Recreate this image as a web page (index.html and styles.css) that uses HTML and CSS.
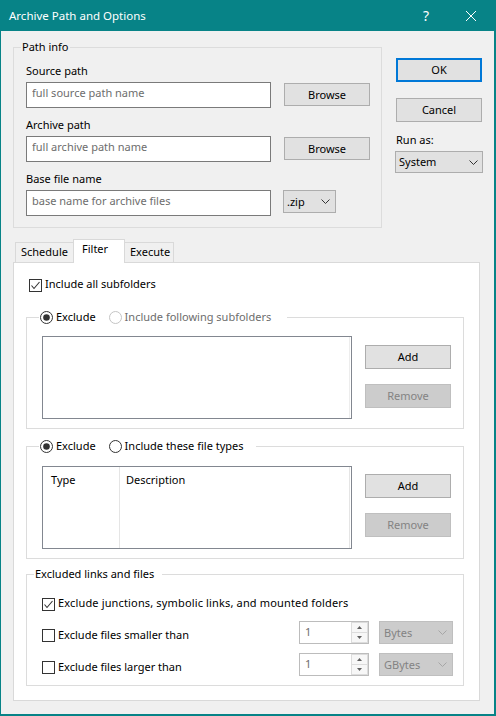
FILE: index.html
```html
<!DOCTYPE html>
<html lang="en">
<head>
<meta charset="utf-8">
<title>Archive Path and Options</title>
<link rel="stylesheet" href="styles.css">
</head>
<body>
<div class="window">
  <div class="titlebar">
    <span class="title">Archive Path and Options</span>
    <span class="cap-btn help">?</span>
    <span class="cap-btn close"><svg width="10" height="10" viewBox="0 0 10 10"><path d="M0 0L10 10M10 0L0 10" stroke="#fff" stroke-width="1" fill="none"/></svg></span>
  </div>
  <div class="client">
    <div class="top">
      <fieldset class="group path">
        <legend class="glegend">Path info</legend>
        <div class="path-body">
          <div class="field">
            <label class="lbl">Source path</label>
            <div class="frow">
              <input class="edit" type="text" placeholder="full source path name">
              <button class="btn browse">Browse</button>
            </div>
          </div>
          <div class="field">
            <label class="lbl">Archive path</label>
            <div class="frow">
              <input class="edit" type="text" placeholder="full archive path name">
              <button class="btn browse">Browse</button>
            </div>
          </div>
          <div class="field">
            <label class="lbl">Base file name</label>
            <div class="frow frow-zip">
              <input class="edit" type="text" placeholder="base name for archive files">
              <div class="combo zip"><span>.zip</span><svg class="chev" width="9" height="5" viewBox="0 0 9 5"><path d="M0.5 0.5L4.5 4.5L8.5 0.5" stroke="#333" fill="none"/></svg></div>
            </div>
          </div>
        </div>
      </fieldset>
      <div class="side">
        <button class="btn ok">OK</button>
        <button class="btn cancel">Cancel</button>
        <span class="lbl runas">Run as:</span>
        <div class="combo system"><span>System</span><svg class="chev" width="9" height="5" viewBox="0 0 9 5"><path d="M0.5 0.5L4.5 4.5L8.5 0.5" stroke="#333" fill="none"/></svg></div>
      </div>
    </div>

    <div class="tabs">
      <div class="tabstrip">
        <div class="tab t-sched">Schedule</div>
        <div class="tab t-filter">Filter</div>
        <div class="tab t-exec">Execute</div>
      </div>
      <div class="panel">
        <div class="chk-row">
          <span class="cb"><svg width="11" height="11" viewBox="0 0 11 11"><polyline points="1.5,5.5 4,8.5 9.5,2" stroke="#333" stroke-width="1.1" fill="none"/></svg></span>
          <span>Include all subfolders</span>
        </div>

        <fieldset class="group g1">
          <legend class="rlegend r1">
            <span class="radios">
              <span class="ritem"><svg class="radio" width="13" height="13" viewBox="0 0 13 13"><circle cx="6.5" cy="6.5" r="6" stroke="#333" fill="#fff"/><circle cx="6.5" cy="6.5" r="3.3" fill="#333"/></svg>Exclude</span>
              <span class="ritem dis"><svg class="radio" width="13" height="13" viewBox="0 0 13 13"><circle cx="6.5" cy="6.5" r="6" stroke="#c4c4c4" fill="#fff"/></svg>Include following subfolders</span>
            </span>
          </legend>
          <div class="g-body">
            <div class="list"><div class="lcol-end"></div></div>
            <div class="btncol">
              <button class="btn add a1">Add</button>
              <button class="btn remove disabled">Remove</button>
            </div>
          </div>
        </fieldset>

        <fieldset class="group g2">
          <legend class="rlegend r2">
            <span class="radios">
              <span class="ritem"><svg class="radio" width="13" height="13" viewBox="0 0 13 13"><circle cx="6.5" cy="6.5" r="6" stroke="#333" fill="#fff"/><circle cx="6.5" cy="6.5" r="3.3" fill="#333"/></svg>Exclude</span>
              <span class="ritem"><svg class="radio" width="13" height="13" viewBox="0 0 13 13"><circle cx="6.5" cy="6.5" r="6" stroke="#333" fill="#fff"/></svg>Include these file types</span>
            </span>
          </legend>
          <div class="g-body g2-body">
            <div class="list lv">
              <div class="lv-col c-type">Type</div>
              <div class="lv-col c-desc">Description</div>
            </div>
            <div class="btncol">
              <button class="btn add a2">Add</button>
              <button class="btn remove disabled">Remove</button>
            </div>
          </div>
        </fieldset>

        <fieldset class="group g3">
          <legend class="glegend l3">Excluded links and files</legend>
          <div class="g3-body">
            <div class="xrow xr1">
              <span class="cb"><svg width="11" height="11" viewBox="0 0 11 11"><polyline points="1.5,5.5 4,8.5 9.5,2" stroke="#333" stroke-width="1.1" fill="none"/></svg></span>
              <span class="wide">Exclude junctions, symbolic links, and mounted folders</span>
            </div>
            <div class="xrow xr2">
              <span class="cb"></span>
              <span class="xtext">Exclude files smaller than</span>
              <div class="spin">
                <span class="spin-val">1</span>
                <span class="updown">
                  <span class="ud"><svg width="5" height="3" viewBox="0 0 5 3"><polygon points="0,3 2.5,0 5,3" fill="#606060"/></svg></span>
                  <span class="ud"><svg width="5" height="3" viewBox="0 0 5 3"><polygon points="0,0 2.5,3 5,0" fill="#606060"/></svg></span>
                </span>
              </div>
              <div class="combo unit disabled"><span>Bytes</span><svg class="chev" width="9" height="5" viewBox="0 0 9 5"><path d="M0.5 0.5L4.5 4.5L8.5 0.5" stroke="#a6a6a6" fill="none"/></svg></div>
            </div>
            <div class="xrow xr3">
              <span class="cb"></span>
              <span class="xtext">Exclude files larger than</span>
              <div class="spin">
                <span class="spin-val">1</span>
                <span class="updown">
                  <span class="ud"><svg width="5" height="3" viewBox="0 0 5 3"><polygon points="0,3 2.5,0 5,3" fill="#606060"/></svg></span>
                  <span class="ud"><svg width="5" height="3" viewBox="0 0 5 3"><polygon points="0,0 2.5,3 5,0" fill="#606060"/></svg></span>
                </span>
              </div>
              <div class="combo unit disabled"><span>GBytes</span><svg class="chev" width="9" height="5" viewBox="0 0 9 5"><path d="M0.5 0.5L4.5 4.5L8.5 0.5" stroke="#a6a6a6" fill="none"/></svg></div>
            </div>
          </div>
        </fieldset>
      </div>
    </div>
  </div>
</div>
</body>
</html>
```

FILE: styles.css
```css
* { box-sizing: border-box; }
html, body { margin: 0; padding: 0; }
body {
  font-family: "Noto Sans", "Open Sans", sans-serif;
  font-size: 11px;
  line-height: 16px;
  color: #000;
  background: #f0f0f0;
}
.window {
  width: 496px;
  height: 716px;
  border-style: solid;
  border-color: #078387;
  border-width: 1px 2px 2px 1px;
  background: #f0f0f0;
  display: flex;
  flex-direction: column;
  overflow: hidden;
}
.titlebar {
  flex: none;
  height: 30px;
  margin-top: -1px;
  padding-top: 1px;
  box-sizing: content-box;
  background: #078387;
  color: #fff;
  display: flex;
  align-items: center;
  padding-left: 8px;
}
.title { flex: 1; font-size: 11.5px; }
.cap-btn {
  width: 46px;
  height: 30px;
  display: flex;
  align-items: center;
  justify-content: center;
}
.help { font-size: 14px; padding-left: 2px; }

.client {
  flex: 1;
  display: flex;
  flex-direction: column;
  padding: 8px 12px 13px 12px;
}
.top { display: flex; gap: 14px; align-items: flex-start; }

fieldset.group {
  margin: 0;
  padding: 0;
  border: 1px solid #dcdcdc;
  min-width: 0;
}
.glegend { padding: 0 1px; margin-left: 7px; line-height: 16px; }

.path { width: 369px; flex: none; }
.path-body { padding: 8px 10px 11px 12px; }
.field + .field { margin-top: 9px; }
.lbl { display: block; height: 16px; line-height: 16px; margin-bottom: 3px; }
.frow { display: flex; gap: 13px; align-items: flex-start; }
.edit {
  width: 245px;
  height: 26px;
  margin: 0;
  border: 1px solid #7a7a7a;
  background: #fff;
  padding: 1px 5px 7px;
  font: inherit;
  line-height: 16px;
  color: #000;
  outline: none;
}
.edit::placeholder { color: #6d6d6d; opacity: 1; }

.btn {
  width: 86px;
  height: 24px;
  margin: 0;
  padding: 0;
  background: #e1e1e1;
  border: 1px solid #adadad;
  font: inherit;
  line-height: 16px;
  color: #000;
}
.browse { height: 23px; margin-top: 1px; }
.btn.disabled { background: #cccccc; border-color: #bfbfbf; color: #838383; }

.combo {
  display: flex;
  align-items: center;
  justify-content: space-between;
  background: #e1e1e1;
  border: 1px solid #adadad;
  padding: 0 4px 0 3px;
}
.combo.disabled { background: #cccccc; border-color: #bfbfbf; color: #838383; }
.chev { flex: none; }
.zip { width: 53px; height: 23px; margin-left: -1px; padding-right: 5px; }

.side { width: 86px; flex: none; padding-top: 19px; display: flex; flex-direction: column; }
.ok { border: 2px solid #0078d7; }
.cancel { margin-top: 16px; }
.runas { margin-top: 10px; margin-bottom: 3px; }
.system { width: 88px; height: 22px; margin-left: -1px; }

.tabs { margin-top: 11px; width: 467px; display: flex; flex-direction: column; }
.tabstrip { display: flex; align-items: flex-end; height: 23px; padding-left: 2px; }
.tab {
  height: 20px;
  border: 1px solid #d9d9d9;
  border-bottom: none;
  padding: 1px 0 0 5px;
  line-height: 16px;
  white-space: nowrap;
}
.tab + .tab { margin-left: -1px; }
.t-sched { width: 59px; }
.t-filter {
  width: 52px;
  height: 24px;
  margin-bottom: -1px;
  padding-left: 8px;
  background: #fff;
  position: relative;
  z-index: 1;
}
.t-exec { width: 50px; }

.panel {
  border: 1px solid #d9d9d9;
  background: #fff;
  padding: 0 15px 14px 12px;
}
.chk-row { display: flex; height: 16px; margin: 13px 0 0 3px; }
.cb {
  flex: none;
  width: 13px;
  height: 13px;
  border: 1px solid #333;
  background: #fff;
  margin-top: 3px;
  margin-right: 3px;
  display: flex;
}
.cb svg { display: block; }

fieldset.g1 { margin-top: 17px; }
fieldset.g2 { margin-top: 9px; }
fieldset.g3 { margin-top: 7px; }
.rlegend { margin-left: 12px; padding: 0 16px 0 1px; line-height: 16px; }
.r2 { padding-right: 12px; }
.radios { display: inline-flex; align-items: center; height: 16px; vertical-align: top; }
.ritem { display: inline-flex; align-items: center; }
.ritem + .ritem { margin-left: 13px; }
.ritem.dis { color: #6d6d6d; }
.radio { flex: none; margin-right: 3px; display: block; }

.g-body { display: flex; gap: 13px; padding: 11px 12px 9px 15px; }
.g2-body { padding-top: 12px; }
.list {
  width: 310px;
  height: 83px;
  flex: none;
  border: 1px solid #828790;
  background: #fff;
  display: flex;
}
.lcol-end { width: 307px; border-right: 1px solid #ededed; }
.btncol { display: flex; flex-direction: column; }
.a1 { margin-top: 9px; }
.a2 { margin-top: 8px; }
.remove { margin-top: 15px; }

.lv-col { border-right: 1px solid #e5e5e5; padding-top: 5px; white-space: nowrap; }
.c-type { width: 77px; padding-left: 8px; }
.c-desc { width: 230px; padding-left: 6px; }

.l3 { padding: 0 8px 0 1px; }
.g3-body { padding: 13px 10px 9px 15px; }
.xrow { display: flex; align-items: flex-start; }
.xr1 { height: 16px; }
.wide { letter-spacing: 0.15px; }
.xr2 { margin-top: 10px; height: 23px; }
.xr3 { margin-top: 9px; height: 23px; }
.xr2 .cb, .xr3 .cb { margin-top: 8px; }
.xtext { margin-top: 6px; }
.spin {
  margin-left: auto;
  width: 70px;
  height: 23px;
  border: 1px solid #bcbcbc;
  background: #fff;
  display: flex;
}
.spin-val { flex: 1; padding: 2px 0 0 5px; color: #6d6d6d; }
.updown { width: 17px; display: flex; flex-direction: column; background: #f0f0f0; }
.ud {
  flex: 1;
  display: flex;
  align-items: center;
  justify-content: center;
  border: 1px solid #dcdcdc;
  background: #f7f7f7;
}
.ud + .ud { border-top: none; }
.ud svg { display: block; }
.unit { width: 74px; height: 23px; margin-left: 10px; padding: 0 5px 0 4px; }
```
